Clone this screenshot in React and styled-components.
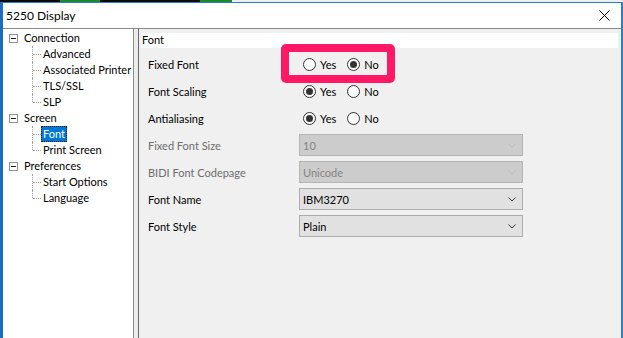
import React from "react";
import styled, { createGlobalStyle, css } from "styled-components";

const GlobalStyle = createGlobalStyle`
  html, body { margin: 0; padding: 0; }
  body {
    background: #dfe9f3;
    font-family: "Lato", "Liberation Sans", sans-serif;
    font-size: 11px;
    color: #000;
  }
`;

const treeData = [
  { name: "Connection", children: ["Advanced", "Associated Printer", "TLS/SSL", "SLP"] },
  { name: "Screen", children: ["Font", "Print Screen"] },
  { name: "Preferences", children: ["Start Options", "Language"] },
];

const rows = [
  { label: "Fixed Font", kind: "radio", value: "No" },
  { label: "Font Scaling", kind: "radio", value: "Yes" },
  { label: "Antialiasing", kind: "radio", value: "Yes" },
  { label: "Fixed Font Size", kind: "select", value: "10", disabled: true },
  { label: "BIDI Font Codepage", kind: "select", value: "Unicode", disabled: true },
  { label: "Font Name", kind: "select", value: "IBM3270" },
  { label: "Font Style", kind: "select", value: "Plain" },
];

export default function App() {
  return (
    <>
      <GlobalStyle />
      <Screen>
        <Backdrop>
          <Terminal />
          <Desktop />
        </Backdrop>
        <Main>
          <Window>
            <TitleBar>
              <Title>5250 Display</Title>
              <CloseButton>
                <svg width="11" height="11" viewBox="0 0 11 11">
                  <path d="M0.5 0.5 L10.5 10.5 M10.5 0.5 L0.5 10.5" stroke="#000" strokeWidth="1" />
                </svg>
              </CloseButton>
            </TitleBar>
            <Body>
              <Tree>
                {treeData.map((group) => (
                  <div key={group.name}>
                    <TreeRow>
                      <Expander>
                        <svg width="9" height="9" viewBox="0 0 9 9">
                          <rect x="0.5" y="0.5" width="8" height="8" fill="#fff" stroke="#919191" />
                          <path d="M2 4.5 H7" stroke="#222" />
                        </svg>
                      </Expander>
                      <NodeLabel>{group.name}</NodeLabel>
                    </TreeRow>
                    {group.children.map((child, i) => (
                      <ChildRow key={child} $last={i === group.children.length - 1}>
                        <NodeLabel $selected={child === "Font"}>{child}</NodeLabel>
                      </ChildRow>
                    ))}
                  </div>
                ))}
              </Tree>
              <Splitter />
              <Panel>
                <PanelHeader>Font</PanelHeader>
                <Form>
                  {rows.map((row) => (
                    <React.Fragment key={row.label}>
                      <FieldLabel $disabled={row.disabled}>{row.label}</FieldLabel>
                      {row.kind === "radio" ? (
                        <RadioGroup>
                          {["Yes", "No"].map((opt) => (
                            <RadioOption key={opt}>
                              <RadioCircle $checked={row.value === opt} />
                              {opt}
                            </RadioOption>
                          ))}
                        </RadioGroup>
                      ) : (
                        <Select $disabled={row.disabled}>
                          <span>{row.value}</span>
                          <svg width="8" height="5" viewBox="0 0 8 5">
                            <path d="M0.5 0.5 L4 4 L7.5 0.5" fill="none" stroke={row.disabled ? "#bcbcbc" : "#333"} strokeWidth="1" />
                          </svg>
                        </Select>
                      )}
                    </React.Fragment>
                  ))}
                </Form>
                <Highlight />
              </Panel>
            </Body>
          </Window>
          <DesktopEdge />
        </Main>
      </Screen>
    </>
  );
}

const Screen = styled.div`
  width: 623px;
  height: 338px;
  overflow: hidden;
  display: flex;
  flex-direction: column;
`;

const Backdrop = styled.div`
  display: flex;
  height: 2px;
`;

const Terminal = styled.div`
  width: 232px;
  background: #0a0a0a;
  background-image: repeating-linear-gradient(90deg, transparent 0 60px, #1c8a2a 60px 100px, transparent 100px 140px);
`;

const Desktop = styled.div`
  flex: 1;
  background: #e9eff5;
`;

const Main = styled.div`
  flex: 1;
  display: flex;
  min-height: 0;
`;

const Window = styled.div`
  width: 618px;
  border-left: 3px solid #1c6cc0;
  border-right: 2px solid #2b7fd0;
  border-top: 1px solid #2b7fd0;
  display: flex;
  flex-direction: column;
  background: #f0f0f0;
`;

const DesktopEdge = styled.div`
  flex: 1;
  background: #cfd9e3;
`;

const TitleBar = styled.div`
  height: 25px;
  background: #fff;
  border-bottom: 1px solid #8a8a8a;
  display: flex;
  align-items: center;
  justify-content: space-between;
`;

const Title = styled.div`
  padding-left: 3px;
  font-size: 12px;
`;

const CloseButton = styled.div`
  width: 30px;
  display: flex;
  align-items: center;
  justify-content: center;
  margin-right: 2px;
`;

const Body = styled.div`
  flex: 1;
  display: flex;
  min-height: 0;
`;

const Tree = styled.div`
  width: 130px;
  background: #fff;
  border-right: 1px solid #8c8c8c;
  padding-top: 1px;
`;

const TreeRow = styled.div`
  height: 16px;
  display: flex;
  align-items: center;
  padding-left: 6px;
`;

const Expander = styled.span`
  width: 9px;
  height: 9px;
  display: flex;
  margin-right: 4px;
`;

const ChildRow = styled.div`
  position: relative;
  height: 16px;
  display: flex;
  align-items: center;
  padding-left: 38px;

  &::before {
    content: "";
    position: absolute;
    left: 29px;
    top: 0;
    height: ${(p) => (p.$last ? "8px" : "16px")};
    border-left: 1px dotted #a0a0a0;
  }

  &::after {
    content: "";
    position: absolute;
    left: 30px;
    top: 8px;
    width: 8px;
    border-top: 1px dotted #a0a0a0;
  }
`;

const NodeLabel = styled.span`
  line-height: 13px;
  padding: 0 1px 1px;
  white-space: nowrap;
  border: 1px solid transparent;
  ${(p) =>
    p.$selected &&
    css`
      background: #0078d7;
      color: #fff;
      border: 1px dotted #1a1a1a;
    `}
`;

const Splitter = styled.div`
  width: 4px;
  background: #ececec;
`;

const Panel = styled.div`
  position: relative;
  flex: 1;
  border-left: 1px solid #696969;
  padding: 4px 3px 0 2px;
`;

const PanelHeader = styled.div`
  height: 15px;
  line-height: 14px;
  background: #fff;
  padding-left: 1px;
`;

const Form = styled.div`
  display: grid;
  grid-template-columns: 151px 224px;
  grid-auto-rows: 22px;
  row-gap: 5px;
  margin-top: 5px;
  padding-left: 7px;
`;

const FieldLabel = styled.div`
  display: flex;
  align-items: center;
  color: ${(p) => (p.$disabled ? "#6d6d6d" : "#000")};
`;

const RadioGroup = styled.div`
  display: flex;
  align-items: center;
  gap: 11px;
  padding-left: 4px;
`;

const RadioOption = styled.label`
  display: flex;
  align-items: center;
  gap: 4px;
`;

const RadioCircle = styled.span`
  width: 11px;
  height: 11px;
  border: 1px solid #333;
  border-radius: 50%;
  background: #fff;
  display: flex;
  align-items: center;
  justify-content: center;

  &::after {
    content: "";
    display: ${(p) => (p.$checked ? "block" : "none")};
    width: 7px;
    height: 7px;
    border-radius: 50%;
    background: #333;
  }
`;

const Select = styled.div`
  display: flex;
  align-items: center;
  justify-content: space-between;
  padding: 0 6px 0 3px;
  border: 1px solid ${(p) => (p.$disabled ? "#b4b4b4" : "#adadad")};
  background: ${(p) => (p.$disabled ? "#cccccc" : "#e1e1e1")};
  color: ${(p) => (p.$disabled ? "#838383" : "#000")};
`;

const Highlight = styled.div`
  position: absolute;
  left: 142px;
  top: 15px;
  width: 98px;
  height: 23px;
  border: 8px solid #fe1865;
  border-radius: 5px;
  pointer-events: none;
`;
